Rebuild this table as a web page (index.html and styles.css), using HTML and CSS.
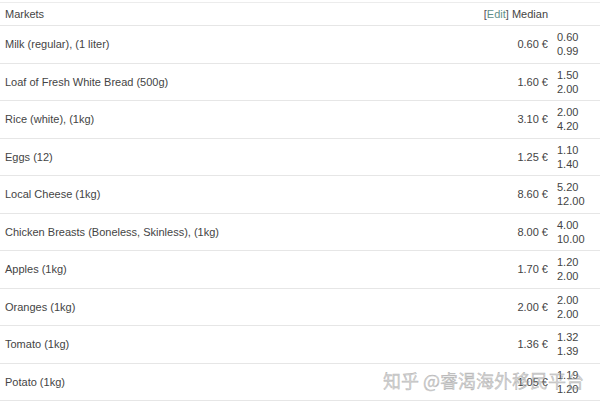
FILE: index.html
```html
<!DOCTYPE html>
<html>
<head>
<meta charset="utf-8">
<link rel="stylesheet" href="styles.css">
</head>
<body>
<div class="table">
  <div class="row head">
    <div class="name">Markets</div>
    <div class="price"><span class="br">[</span><span class="edit">Edit</span><span class="br">]</span> Median</div>
    <div class="range"></div>
  </div>
  <div class="row"><div class="name">Milk (regular), (1 liter)</div><div class="price">0.60 €</div><div class="range"><span>0.60</span><span>0.99</span></div></div>
  <div class="row"><div class="name">Loaf of Fresh White Bread (500g)</div><div class="price">1.60 €</div><div class="range"><span>1.50</span><span>2.00</span></div></div>
  <div class="row"><div class="name">Rice (white), (1kg)</div><div class="price">3.10 €</div><div class="range"><span>2.00</span><span>4.20</span></div></div>
  <div class="row"><div class="name">Eggs (12)</div><div class="price">1.25 €</div><div class="range"><span>1.10</span><span>1.40</span></div></div>
  <div class="row"><div class="name">Local Cheese (1kg)</div><div class="price">8.60 €</div><div class="range"><span>5.20</span><span>12.00</span></div></div>
  <div class="row"><div class="name">Chicken Breasts (Boneless, Skinless), (1kg)</div><div class="price">8.00 €</div><div class="range"><span>4.00</span><span>10.00</span></div></div>
  <div class="row"><div class="name">Apples (1kg)</div><div class="price">1.70 €</div><div class="range"><span>1.20</span><span>2.00</span></div></div>
  <div class="row"><div class="name">Oranges (1kg)</div><div class="price">2.00 €</div><div class="range"><span>2.00</span><span>2.00</span></div></div>
  <div class="row"><div class="name">Tomato (1kg)</div><div class="price">1.36 €</div><div class="range"><span>1.32</span><span>1.39</span></div></div>
  <div class="row"><div class="name">Potato (1kg)</div><div class="price">1.05 €</div><div class="range"><span>1.19</span><span>1.20</span></div></div>
</div>
<div class="watermark">知乎 @睿渴海外移民平台</div>
</body>
</html>
```
FILE: styles.css
```css
html, body {
  margin: 0;
  padding: 0;
  background: #ffffff;
}
body {
  font-family: "Liberation Sans", Arial, sans-serif;
  font-size: 11px;
  color: #444444;
  width: 600px;
  height: 401px;
  overflow: hidden;
  position: relative;
}
.table {
  padding-top: 2px;
}
.row {
  display: grid;
  grid-template-columns: 1fr auto 43px;
  column-gap: 9px;
  align-items: center;
  height: 37.5px;
  box-sizing: border-box;
  border-bottom: 1px solid #e6e6e6;
}
.row.head {
  height: 24px;
  border-top: 1px solid #ececec;
}
.name {
  padding-left: 5px;
  white-space: nowrap;
}
.price {
  text-align: right;
  white-space: nowrap;
}
.edit {
  color: #5f8f8a;
}
.br {
  color: #555;
}
.range {
  display: flex;
  flex-direction: column;
  line-height: 14px;
}
.watermark {
  position: absolute;
  left: 383px;
  top: 367px;
  font-family: "Noto Sans CJK SC", sans-serif;
  font-size: 18px;
  color: rgba(170, 170, 170, 0.5);
  -webkit-text-stroke: 0.4px rgba(120, 120, 120, 0.5);
  white-space: nowrap;
}
```
